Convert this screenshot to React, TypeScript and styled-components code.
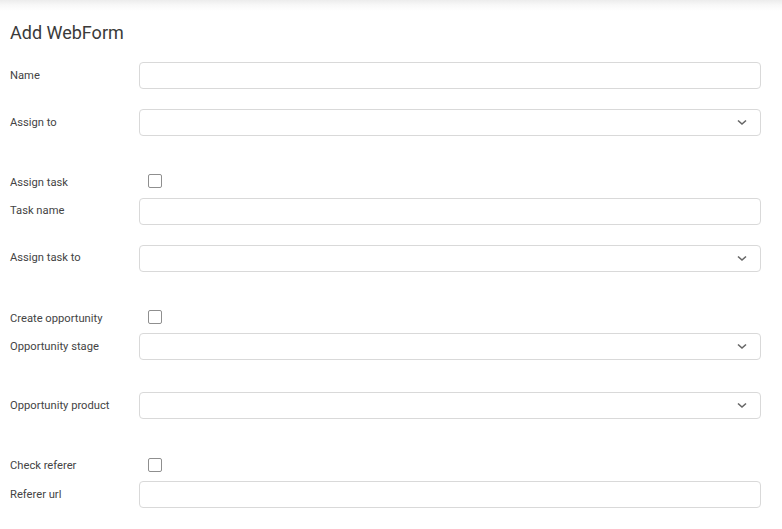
import React from "react";
import styled, { createGlobalStyle } from "styled-components";

const Global = createGlobalStyle`
  html, body { margin: 0; padding: 0; background: #fff; }
  body { font-family: Roboto, "Noto Sans", Arial, sans-serif; color: #444; }
  * { box-sizing: border-box; }
`;

const Page = styled.div`
  min-height: 529px;
  background: linear-gradient(to bottom, #ececec 0px, #f8f8f8 5px, #ffffff 11px);
  padding: 21px 21px 0 10px;
`;

const Title = styled.h1`
  margin: 0 0 17px;
  font-size: 18px;
  font-weight: 400;
  color: #3a3a3a;
  line-height: 24px;
`;

const Form = styled.form`
  display: flex;
  flex-direction: column;
`;

const Row = styled.div<{ $kind: "input" | "select" | "check" }>`
  display: grid;
  grid-template-columns: 129px 1fr;
  align-items: center;
  height: ${(p) => (p.$kind === "check" ? "29.7px" : "27px")};
  margin-bottom: ${(p) =>
    p.$kind === "input" ? "20px" : p.$kind === "select" ? "32px" : "0px"};
`;

const Label = styled.label`
  font-size: 11.2px;
  color: #444;
  line-height: 14px;
`;

const TextInput = styled.input`
  height: 27px;
  width: 100%;
  border: 1px solid #d9d9d9;
  border-radius: 4px;
  background: #fff;
  padding: 0 10px;
  font-family: inherit;
  font-size: 12px;
  outline: none;
`;

const SelectBox = styled.div`
  position: relative;
  height: 27px;
  width: 100%;
  border: 1px solid #d9d9d9;
  border-radius: 4px;
  background: #fff;
`;

const Chevron = styled.svg`
  position: absolute;
  right: 13px;
  top: 9px;
`;

const Check = styled.span`
  display: inline-block;
  width: 14px;
  height: 14px;
  margin: 0 0 3px 9px;
  border: 1px solid #8f8f8f;
  border-radius: 2px;
  background: #fff;
`;

const CheckCell = styled.div`
  display: flex;
  align-items: center;
`;

type Field = { label: string; kind: "input" | "select" | "check" };

const fields: Field[] = [
  { label: "Name", kind: "input" },
  { label: "Assign to", kind: "select" },
  { label: "Assign task", kind: "check" },
  { label: "Task name", kind: "input" },
  { label: "Assign task to", kind: "select" },
  { label: "Create opportunity", kind: "check" },
  { label: "Opportunity stage", kind: "select" },
  { label: "Opportunity product", kind: "select" },
  { label: "Check referer", kind: "check" },
  { label: "Referer url", kind: "input" },
];

export default function App() {
  return (
    <>
      <Global />
      <Page>
        <Title>Add WebForm</Title>
        <Form>
          {fields.map((f) => (
            <Row key={f.label} $kind={f.kind}>
              <Label>{f.label}</Label>
              {f.kind === "input" && <TextInput />}
              {f.kind === "select" && (
                <SelectBox>
                  <Chevron width="10" height="7" viewBox="0 0 10 7">
                    <path
                      d="M1 1.5 L5 5 L9 1.5"
                      fill="none"
                      stroke="#666"
                      strokeWidth="1.6"
                    />
                  </Chevron>
                </SelectBox>
              )}
              {f.kind === "check" && (
                <CheckCell>
                  <Check />
                </CheckCell>
              )}
            </Row>
          ))}
        </Form>
      </Page>
    </>
  );
}
